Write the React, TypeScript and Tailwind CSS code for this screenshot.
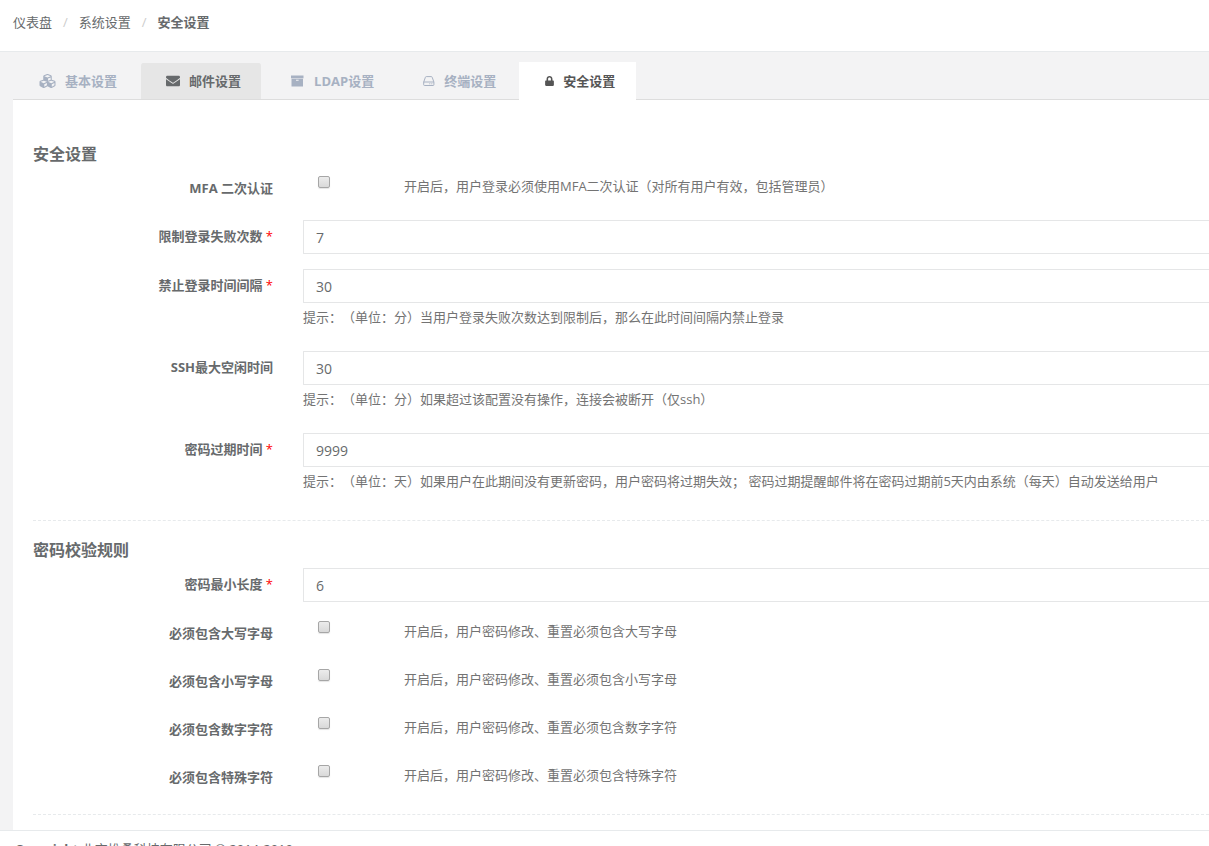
import { useState } from 'react';
import type { ReactNode } from 'react';
import { FaCubes, FaEnvelope, FaLock } from 'react-icons/fa';

function ArchiveIcon() {
  return (
    <svg viewBox="0 0 15 12" fill="currentColor" className="w-[15px] h-3">
      <path d="M1 .5h12.500v2.800H1z" />
      <path fillRule="evenodd" d="M1.500 3.700H13v7.800H1.500zM6 4.800v1h2.600v-1z" />
    </svg>
  );
}

function HddIcon() {
  return (
    <svg viewBox="0 0 12 12" fill="none" stroke="currentColor" className="w-3 h-3">
      <path d="M.7 7 2.400 2.300q.2-.7.900-.7h5q.7 0 .9.700L10.900 7v2.800q0 .7-.7.700H1.400q-.7 0-.7-.7zM.7 7h10.200" />
      <path d="M6.300 8.800h1M8.300 8.800h1" />
    </svg>
  );
}

const tabs = [
  { name: '基本设置', icon: <FaCubes className="w-[17px] h-4" /> },
  { name: '邮件设置', icon: <FaEnvelope className="w-3.5 h-3.5" /> },
  { name: 'LDAP设置', icon: <ArchiveIcon /> },
  { name: '终端设置', icon: <HddIcon /> },
  { name: '安全设置', icon: <FaLock className="w-[9px] h-2.5" /> },
];

const rules = [
  { id: 'upper', label: '必须包含大写字母', help: '开启后，用户密码修改、重置必须包含大写字母' },
  { id: 'lower', label: '必须包含小写字母', help: '开启后，用户密码修改、重置必须包含小写字母' },
  { id: 'number', label: '必须包含数字字符', help: '开启后，用户密码修改、重置必须包含数字字符' },
  { id: 'special', label: '必须包含特殊字符', help: '开启后，用户密码修改、重置必须包含特殊字符' },
];

function Row({ id, label, required, children }: { id: string; label: string; required?: boolean; children: ReactNode }) {
  return (
    <div className="grid grid-cols-[240px_1fr] gap-x-[30px] mb-[15px]">
      <label htmlFor={id} className="pt-1.5 leading-5 font-bold text-right">
        {label}
        {required && <span className="text-[#ff0000] font-normal"> *</span>}
      </label>
      <div>{children}</div>
    </div>
  );
}

function TextRow({ id, label, value, required, help }: { id: string; label: string; value: string; required?: boolean; help?: string }) {
  return (
    <Row id={id} label={label} required={required}>
      <input
        id={id}
        type="text"
        defaultValue={value}
        className="block w-full h-[34px] px-3 text-sm bg-white border border-r-0 border-[#e5e6e7] rounded-l-[1px] outline-none focus:border-[#1ab394]"
      />
      {help && <p className="mt-1 mb-[9px] leading-5 text-[#737373]">{help}</p>}
    </Row>
  );
}

function CheckRow({ id, label, help }: { id: string; label: string; help: string }) {
  return (
    <Row id={id} label={label}>
      <div className="flex h-[33px] pl-[15px]">
        <input
          id={id}
          type="checkbox"
          className="appearance-none shrink-0 w-3 h-3 mt-1 mr-[74px] border border-[#a6a6a6] rounded-[2px] bg-linear-to-b from-[#ececec] to-[#d9d9d9] shadow-[0_1px_1px_#e5e5e5] checked:from-[#676a6c] checked:to-[#676a6c]"
        />
        <span className="pt-1 leading-5 text-[#737373]">{help}</span>
      </div>
    </Row>
  );
}

export default function App() {
  const [active, setActive] = useState(4);

  return (
    <div className="bg-[#f3f3f4] text-[13px] text-[#676a6c] font-['Open_Sans','Noto_Sans_CJK_SC',sans-serif] [text-spacing-trim:space-all]">
      <nav className="h-[52px] pl-[13px] pt-3 bg-white border-b border-[#e7eaec] leading-5">
        <ol className="flex">
          <li><a href="#">仪表盘</a></li>
          <li className="px-[11px] text-[#cccccc]">/</li>
          <li><a href="#">系统设置</a></li>
          <li className="px-[11px] text-[#cccccc]">/</li>
          <li><strong>安全设置</strong></li>
        </ol>
      </nav>

      <main className="pl-[13px] pt-2.5">
        <div className="flex items-end h-[38px] border-b border-[#dddddd]">
          {tabs.map((tab, index) => (
            <button
              key={tab.name}
              type="button"
              onClick={() => setActive(index)}
              className={`flex items-center shrink-0 mr-0.5 pl-[25px] pr-5 gap-[9px] border-x border-transparent font-bold leading-5 ${
                index === active
                  ? 'h-[38px] -mb-px bg-white text-[#555555]'
                  : index === 1
                    ? 'h-9 bg-[#e6e6e6] bg-clip-padding text-[#676a6c] rounded-t-[3px]'
                    : 'h-9 text-[#a7b1c2]'
              }`}
            >
              {tab.icon}
              {tab.name}
            </button>
          ))}
        </div>

        <form className="bg-white pl-5 pt-[42px] pb-[15px]">
          <h3 className="mb-1.5 text-base leading-6 font-bold">安全设置</h3>
          <CheckRow id="mfa" label="MFA 二次认证" help="开启后，用户登录必须使用MFA二次认证（对所有用户有效，包括管理员）" />
          <TextRow id="limit" label="限制登录失败次数" value="7" required />
          <TextRow
            id="interval"
            label="禁止登录时间间隔"
            value="30"
            required
            help="提示：（单位：分）当用户登录失败次数达到限制后，那么在此时间间隔内禁止登录"
          />
          <TextRow
            id="idle"
            label="SSH最大空闲时间"
            value="30"
            help="提示：（单位：分）如果超过该配置没有操作，连接会被断开（仅ssh）"
          />
          <TextRow
            id="expire"
            label="密码过期时间"
            value="9999"
            required
            help="提示：（单位：天）如果用户在此期间没有更新密码，用户密码将过期失效； 密码过期提醒邮件将在密码过期前5天内由系统（每天）自动发送给用户"
          />
          <hr className="mt-5 mb-[17px] border-dashed border-[#e7eaec]" />
          <h3 className="mb-1.5 text-base leading-6 font-bold">密码校验规则</h3>
          <TextRow id="length" label="密码最小长度" value="6" required />
          {rules.map((rule) => (
            <CheckRow key={rule.id} id={rule.id} label={rule.label} help={rule.help} />
          ))}
          <hr className="mt-5 border-dashed border-[#e7eaec]" />
        </form>
      </main>

      <footer className="px-[15px] py-2 bg-white border-t border-[#e7eaec] leading-5">
        <strong>Copyright</strong> 北京堆叠科技有限公司 © 2014-2019
      </footer>
    </div>
  );
}
